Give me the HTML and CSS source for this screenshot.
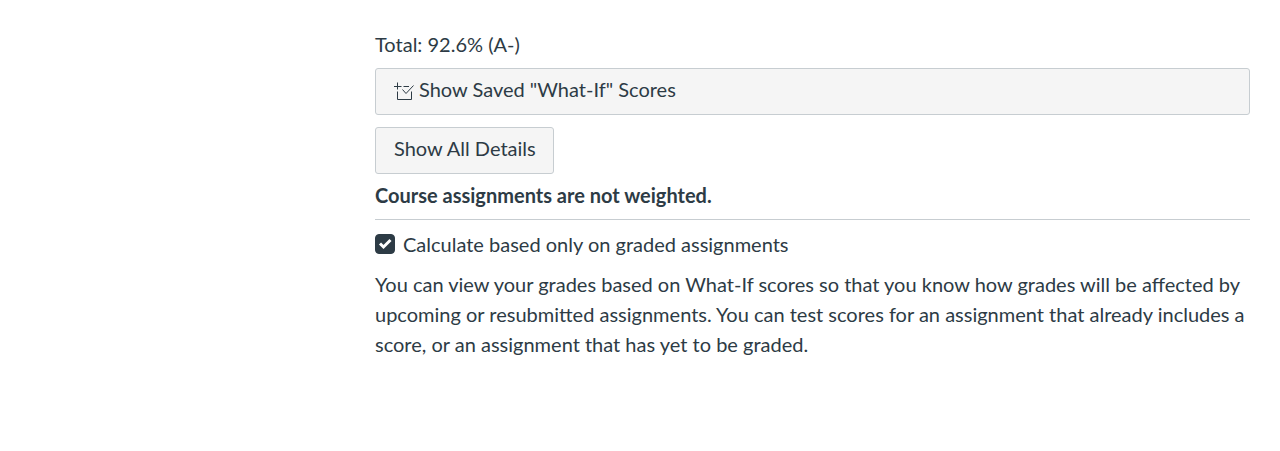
FILE: index.html
```html
<!DOCTYPE html>
<html lang="en">
<head>
<meta charset="utf-8">
<title>Grades</title>
<link rel="stylesheet" href="styles.css">
</head>
<body>
<main class="grades">
  <p class="total">Total: 92.6% (A-)</p>
  <button class="btn btn-block" type="button">
    <svg class="icon" viewBox="0 0 20 20" aria-hidden="true"><path d="M0 5.500h7.500M3.500 1.500v7M3.500 10.500v8h14v-8M9.500 5.500h5.500M8.500 8.500l3.500 4 7.500-8"/></svg>
    <span>Show Saved "What-If" Scores</span>
  </button>
  <button class="btn" type="button">Show All Details</button>
  <h2 class="weights">Course assignments are not weighted.</h2>
  <label class="check">
    <span class="check-control">
      <input class="check-box" type="checkbox" checked>
      <svg class="check-mark" viewBox="0 0 20 20" aria-hidden="true"><path d="M5 9.500l3.500 3.500 7-7"/></svg>
    </span>
    <span>Calculate based only on graded assignments</span>
  </label>
  <p class="hint">You can view your grades based on What-If scores so that you know how grades will be affected by upcoming or resubmitted assignments. You can test scores for an assignment that already includes a score, or an assignment that has yet to be graded.</p>
</main>
</body>
</html>
```
FILE: styles.css
```css
body {
  margin: 0;
  background: #fff;
  color: #2d3b45;
  font: 20px/30px Lato, sans-serif;
}
.grades {
  display: flex;
  flex-direction: column;
  align-items: flex-start;
  padding: 29px 30px 0 375px;
}
.total { margin: 0 0 9px; }
.btn {
  display: flex;
  align-items: center;
  gap: 5px;
  margin: 0 0 12px;
  padding: 6px 17px 10px 18px;
  border: 1px solid #c7cdd1;
  border-radius: 3px;
  background: #f5f5f5;
  color: inherit;
  font: inherit;
  line-height: 29px;
}
.btn-block { align-self: stretch; }
.icon {
  width: 20px;
  height: 20px;
  margin-top: 3px;
  fill: none;
  stroke: #2d3b45;
  stroke-width: 1;
}
.weights {
  align-self: stretch;
  margin: -6px 0 9px;
  padding: 0 0 9px;
  border-bottom: 1px solid #c7cdd1;
  font: inherit;
  font-weight: 700;
}
.check {
  display: flex;
  align-items: center;
  gap: 8px;
}
.check-control {
  position: relative;
  width: 20px;
  height: 20px;
}
.check-box {
  display: block;
  appearance: none;
  width: 20px;
  height: 20px;
  margin: 0;
  border: 1px solid #2d3b45;
  border-radius: 4px;
  background: #fff;
}
.check-box:checked { background: #2d3b45; }
.check-mark {
  position: absolute;
  inset: 0;
  fill: none;
  stroke: #fff;
  stroke-width: 3;
  pointer-events: none;
}
.hint { margin: 10px 0 0; }
```
